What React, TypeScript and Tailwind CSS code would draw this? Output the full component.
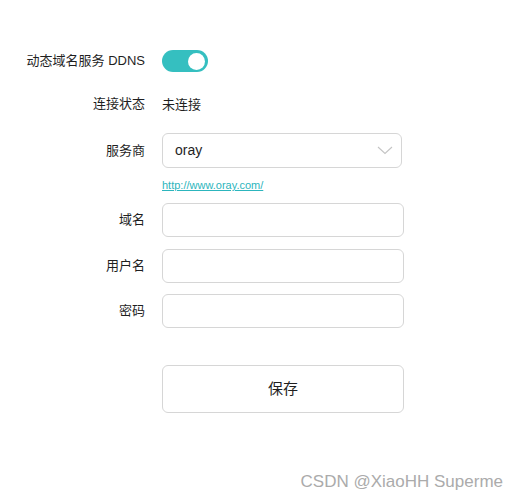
import { useState } from 'react';

const font = { fontFamily: '"Liberation Sans", "Noto Sans CJK SC", sans-serif' };

function Row({ label, children, className = '' }: { label: string; children: React.ReactNode; className?: string }) {
  return (
    <div className={`flex items-center ${className}`}>
      <div className="w-[145px] shrink-0 text-right text-[13px] text-[#1f1f1f]">{label}</div>
      <div className="ml-[17px]">{children}</div>
    </div>
  );
}

export default function App() {
  const [enabled, setEnabled] = useState(true);

  return (
    <div className="relative h-[500px] w-[516px] bg-white" style={font}>
      <div className="flex flex-col pt-[50px]">
        {/* DDNS switch */}
        <Row label="动态域名服务 DDNS">
          <button
            onClick={() => setEnabled(!enabled)}
            className={`flex h-[22px] w-[46px] items-center rounded-full px-[3px] ${
              enabled ? 'justify-end bg-[#35bfc0]' : 'justify-start bg-[#ccc]'
            }`}
          >
            <span className="h-[17px] w-[17px] rounded-full bg-white" />
          </button>
        </Row>

        {/* status */}
        <Row label="连接状态" className="mt-[22px] h-[20px]">
          <span className="text-[13px] text-[#1f1f1f]">未连接</span>
        </Row>

        {/* provider */}
        <Row label="服务商" className="mt-[19px]">
          <div className="flex h-[35px] w-[240px] items-center justify-between rounded-[6px] border border-[#d6d6d6] pl-[12px] pr-[8px]">
            <span className="text-[14px] text-[#1f1f1f]">oray</span>
            <svg width="16" height="9" viewBox="0 0 16 9" fill="none">
              <path d="M1 1l7 6.5L15 1" stroke="#c4c4c4" strokeWidth="1.1" />
            </svg>
          </div>
        </Row>
        <div className="ml-[162px] mt-[10px] h-[14px] text-[11px] leading-[14px]">
          <a href="#" className="text-[#2cb5bd] underline">http://www.oray.com/</a>
        </div>

        <Row label="域名" className="mt-[11px]">
          <input className="h-[34px] w-[242px] rounded-[6px] border border-[#d6d6d6] px-3 text-[13px] outline-none" />
        </Row>
        <Row label="用户名" className="mt-[12px]">
          <input className="h-[34px] w-[242px] rounded-[6px] border border-[#d6d6d6] px-3 text-[13px] outline-none" />
        </Row>
        <Row label="密码" className="mt-[11px]">
          <input type="password" className="h-[34px] w-[242px] rounded-[6px] border border-[#d6d6d6] px-3 text-[13px] outline-none" />
        </Row>

        <div className="ml-[162px] mt-[37px]">
          <button className="h-[48px] w-[242px] rounded-[6px] border border-[#d6d6d6] bg-white text-[15px] text-[#1f1f1f]">
            保存
          </button>
        </div>
      </div>

      {/* watermark */}
      <div className="absolute right-[13px] top-[471px] text-[17px] leading-[22px] text-[#ababab]">
        CSDN @XiaoHH Superme
      </div>
    </div>
  );
}
